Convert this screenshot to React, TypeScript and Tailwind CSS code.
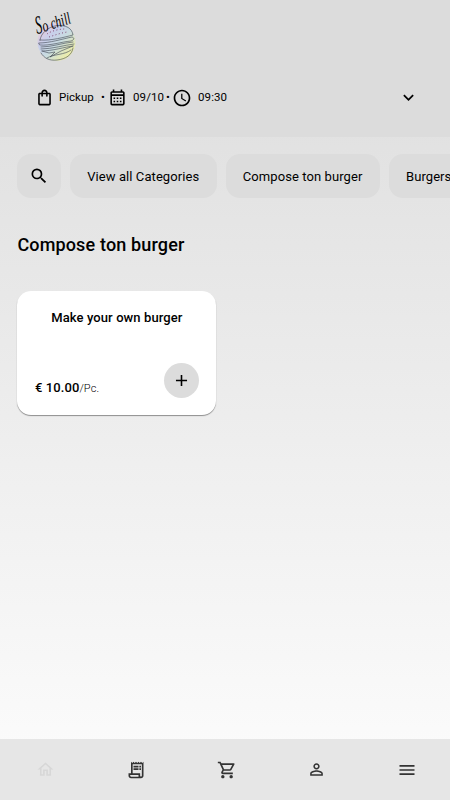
import {
  MdAccessTime,
  MdAdd,
  MdMenu,
  MdOutlineCalendarMonth,
  MdOutlineHome,
  MdOutlineReceiptLong,
  MdOutlineShoppingBag,
  MdOutlineShoppingCart,
  MdPersonOutline,
  MdSearch,
} from "react-icons/md";

const categories = ["View all Categories", "Compose ton burger", "Burgers"];

const Logo: React.FC = () => (
  <svg width="45" height="56" viewBox="0 0 45 56" className="block overflow-visible">
    <defs>
      <linearGradient id="bun" x1="0.05" y1="0.2" x2="0.75" y2="0.9">
        <stop offset="0" stopColor="#e8cbdc" />
        <stop offset="0.3" stopColor="#c8cfeb" />
        <stop offset="0.6" stopColor="#c9dce0" />
        <stop offset="1" stopColor="#ecedaa" />
      </linearGradient>
    </defs>
    <circle cx="21.5" cy="35" r="19" fill="url(#bun)" />
    <g fill="none" stroke="#3f4652" strokeWidth="0.6" strokeLinecap="round" strokeLinejoin="round">
      <path d="M5 33C6 26 13 20 22 18.5C31 18 37 21 38 28C30 30 16 34 5 33Z" />
      <path d="M4 36C15 36 27 32 37 30C40 31 39 33 36 34C26 35 14 39 5 38Z" />
      <path d="M6 40C17 40 27 36 38 35M6 42C17 42 30 38 39 37M7 44C17 44 30 40 38 39" />
      <path d="M7 44L14 46L20 45L15 50L26 44L38 39" />
      <path d="M6 46C9 51 14 54 22 53C31 52 37 48 38 41M12 51C18 47 30 48 36 43" />
    </g>
    <g fill="none" stroke="#7d3f66" strokeWidth="0.9" strokeDasharray="1 2.4">
      <path d="M12 27C16 24 24 22 30 22M14 30C20 28 26 26 32 25" />
    </g>
    <g className="fill-black font-['Liberation_Serif',serif] italic">
      <text transform="translate(2 27) rotate(-12) scale(0.5 1)" className="text-[26px]">
        S
      </text>
      <text transform="translate(9 25) rotate(-18) scale(0.68 1)" className="text-[17px]">
        o chill
      </text>
    </g>
  </svg>
);

const ChevronDown: React.FC = () => (
  <svg width="21" height="21" viewBox="0 0 24 24" fill="currentColor">
    <path d="M7.41,8.58L12,13.17L16.59,8.58L18,10L12,16L6,10L7.41,8.58Z" />
  </svg>
);

const Header: React.FC = () => (
  <header className="h-[137px] shrink-0 bg-[#dcdcdc] pl-[35px] pr-[31px]">
    <div className="h-[87px] pt-[7px]">
      <Logo />
    </div>
    <div className="flex h-[21px] items-center text-[11.5px]">
      <MdOutlineShoppingBag size={19} />
      <span className="ml-[5px] w-[42px]">Pickup</span>
      <span className="w-[7px]">•</span>
      <MdOutlineCalendarMonth size={19} />
      <span className="ml-[6px] w-[33px] tracking-[0.1px]">09/10</span>
      <span className="w-[6px]">•</span>
      <MdAccessTime size={20} />
      <span className="ml-[6px] tracking-[0.1px]">09:30</span>
      <button className="ml-auto">
        <ChevronDown />
      </button>
    </div>
  </header>
);

const ProductCard: React.FC = () => (
  <article className="mt-[33.4px] flex h-[124px] w-[199px] flex-col justify-between rounded-[14px] bg-white px-[17.5px] pt-[18px] pb-[17.5px] shadow-[0_1px_1px_rgba(0,0,0,0.4)]">
    <h3 className="text-center text-[13px] leading-[18px] font-medium tracking-[0.1px]">
      Make your own burger
    </h3>
    <div className="flex items-end justify-between">
      <p className="text-[13px] leading-[18px] font-medium tracking-[0.1px]">
        € 10.00<span className="text-[11px] font-light">/Pc.</span>
      </p>
      <button className="flex size-[35px] items-center justify-center rounded-full bg-[#dcdcdc]">
        <MdAdd size={19} />
      </button>
    </div>
  </article>
);

const BottomNav: React.FC = () => (
  <nav className="flex h-[61px] shrink-0 items-center justify-between bg-[#e6e6e6] pl-9 pr-[33px] text-[#333]">
    <MdOutlineHome size={19} className="text-[#d7d7d7]" />
    <MdOutlineReceiptLong size={20} />
    <MdOutlineShoppingCart size={20} />
    <MdPersonOutline size={19} />
    <MdMenu size={20} />
  </nav>
);

export default function App() {
  return (
    <div className="flex h-screen flex-col overflow-hidden bg-linear-to-b from-[#dcdcdc] to-[#fdfdfd] font-[Roboto,sans-serif] text-black">
      <Header />
      <main className="flex-1 overflow-hidden pt-[17px] pl-[17.4px]">
        <div className="flex gap-[9px] overflow-hidden">
          <button className="flex h-11 w-[43.5px] shrink-0 items-center justify-center rounded-[14px] bg-[#dcdcdc]">
            <MdSearch size={20} />
          </button>
          {categories.map((name) => (
            <button
              key={name}
              className="h-11 shrink-0 rounded-[14px] bg-[#dcdcdc] px-[17.3px] pt-px text-[13px] tracking-[0.08px]"
            >
              {name}
            </button>
          ))}
        </div>
        <h2 className="mt-[34px] text-[18px] leading-[26px] font-medium tracking-[0.15px]">
          Compose ton burger
        </h2>
        <ProductCard />
      </main>
      <BottomNav />
    </div>
  );
}
